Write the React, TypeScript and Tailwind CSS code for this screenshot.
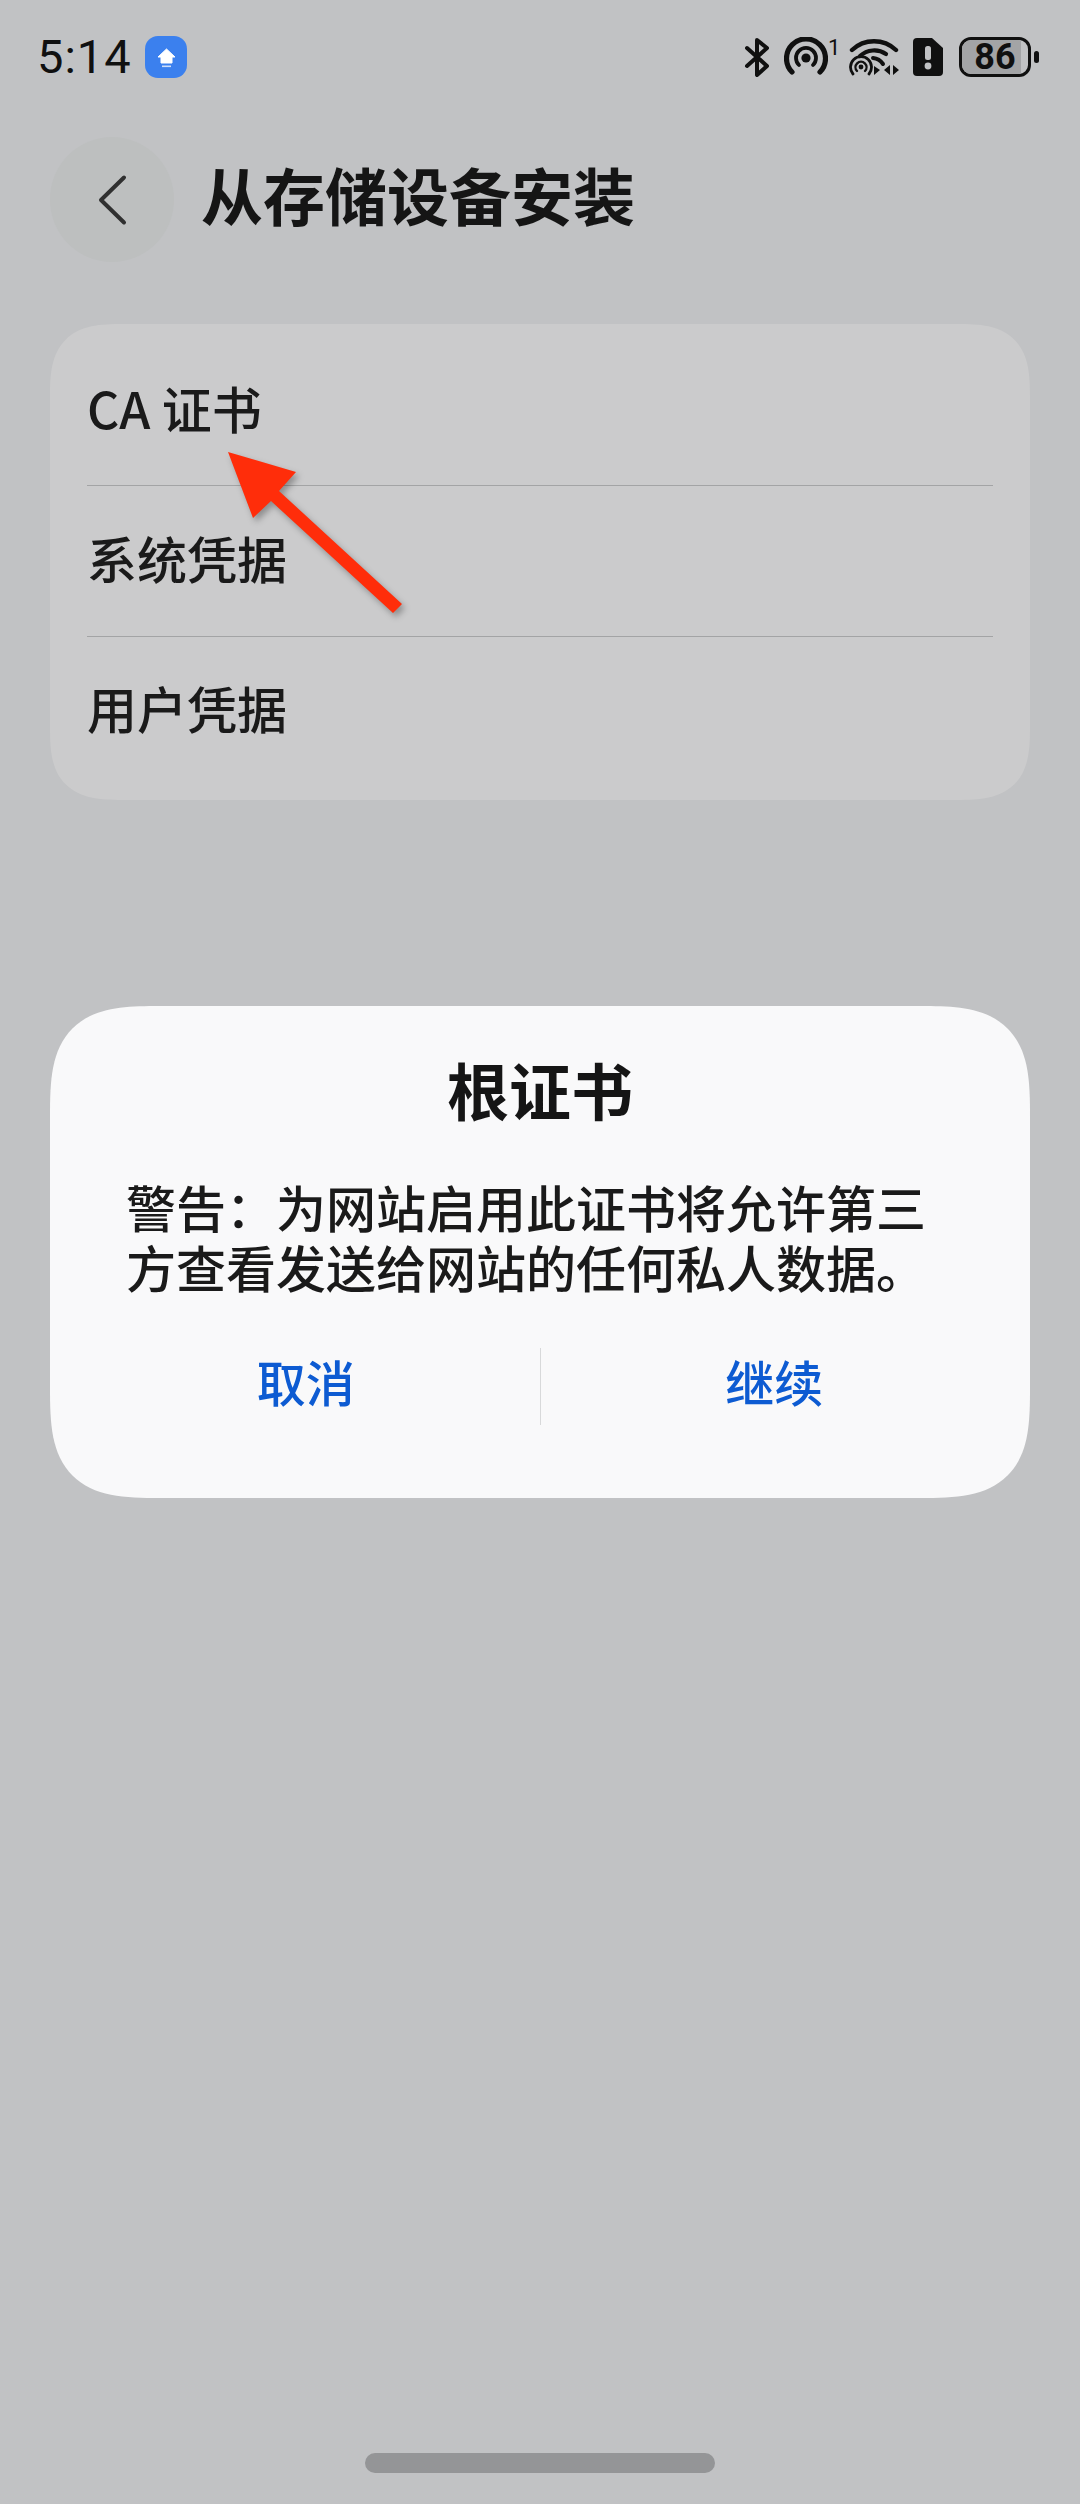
const F = '[font-family:"Noto_Sans_CJK_SC","Noto_Sans",sans-serif]';

function Bluetooth() {
  return (
    <svg width="26" height="40" viewBox="0 0 26 40" fill="none" stroke="#101010" strokeWidth="4" strokeLinecap="round" strokeLinejoin="round">
      <path d="M3 11 L23 29 L13 38 L13 3 L23 11 L3 29" />
    </svg>
  );
}

function Hotspot() {
  return (
    <svg width="44" height="40" viewBox="0 0 44 40" fill="none" stroke="#101010" strokeLinecap="round">
      <path d="M8 35 A19.5 19.5 0 1 1 36 35" strokeWidth="5.2" />
      <path d="M15 28 A10 10 0 1 1 29 28" strokeWidth="3.8" />
      <circle cx="22" cy="21" r="4.6" fill="#101010" stroke="none" />
    </svg>
  );
}

function Wifi() {
  return (
    <svg width="50" height="40" viewBox="0 0 50 40" fill="none" stroke="#101010" strokeLinecap="round">
      <path d="M3 13 A32 32 0 0 1 47 13" strokeWidth="4.4" />
      <path d="M11 19 A21 21 0 0 1 37 17" strokeWidth="4.2" />
      <path d="M24 21 A14 14 0 0 1 34 27" strokeWidth="4" />
      <path d="M4 37 A10.5 10.5 0 1 1 20 37" strokeWidth="2.8" />
      <path d="M8 34 A5.5 5.5 0 1 1 16 34" strokeWidth="2.4" />
      <circle cx="12" cy="30" r="2.4" fill="#101010" stroke="none" />
      <path d="M25 29 L31 33 L25 38 Z" fill="#101010" stroke="none" />
      <path d="M41 28 L41 38 L35 33 Z M44 28 L44 38 L50 33 Z" fill="#101010" stroke="none" />
    </svg>
  );
}

function SimAlert() {
  return (
    <svg width="30" height="38" viewBox="0 0 30 38">
      <path d="M4 0 H19 L30 10 V34 A4 4 0 0 1 26 38 H4 A4 4 0 0 1 0 34 V4 A4 4 0 0 1 4 0 Z" fill="#101010" />
      <rect x="12" y="8" width="6" height="14" rx="2.5" fill="#c1c2c4" />
      <circle cx="15" cy="28" r="3.4" fill="#c1c2c4" />
    </svg>
  );
}

function UploadBadge() {
  return (
    <svg width="42" height="42" viewBox="0 0 42 42">
      <rect width="42" height="42" rx="13" fill="#3b80ee" />
      <path d="M21.5 13 L30 21 H27 V27 H16 V21 H13 Z" fill="#fff" stroke="#fff" strokeWidth="1" strokeLinejoin="round" />
      <rect x="17" y="29.5" width="9" height="1.6" fill="#cfe0fb" />
    </svg>
  );
}

function Arrow() {
  return (
    <svg className="absolute left-[220px] top-[446px] drop-shadow-[3px_4px_3px_rgba(0,0,0,0.3)]" width="190" height="175" viewBox="220 446 190 175">
      <path d="M228 452 L296 472 L279 491 L402 604 L393 613 L271 501 L253 518 Z" fill="#ff2d0a" />
    </svg>
  );
}

export default function App() {
  return (
    <div className={`relative flex h-[2504px] w-[1080px] flex-col overflow-hidden bg-[#c1c2c4] ${F}`}>
      {/* status bar */}
      <div className="flex h-[112px] items-center pl-[37px] pr-[41px] pt-[1px] text-[#101010]">
        <span className="mr-[13px] font-['Roboto'] text-[47px] leading-none tracking-[1px]">5:14</span>
        <UploadBadge />
        <div className="ml-auto flex items-center">
          <Bluetooth />
          <div className="ml-[14px]"><Hotspot /></div>
          <span className="mb-[18px] w-[12px] font-['Roboto'] text-[22px] leading-none">1</span>
          <div className="ml-[9px]"><Wifi /></div>
          <div className="ml-[14px]"><SimAlert /></div>
          <div className="relative ml-[16px] flex h-[40px] w-[72px] items-center justify-center overflow-hidden rounded-[12px] border-[3px] border-[#101010]">
            <div className="absolute inset-y-0 left-0 w-[59px] bg-[#a3a4a6]" />
            <span className="relative font-['Roboto'] text-[36px] font-bold leading-none">86</span>
          </div>
          <div className="ml-[3px] h-[12px] w-[5px] rounded-full bg-[#101010]" />
        </div>
      </div>

      {/* header */}
      <div className="ml-[50px] mt-[25px] flex h-[125px] items-center">
        <div className="flex h-[125px] w-[124px] items-center justify-center rounded-full bg-[#bdbfbf]">
          <svg width="36" height="56" viewBox="0 0 36 56" fill="none" stroke="#303030" strokeWidth="4" strokeLinecap="round" strokeLinejoin="round">
            <path d="M30 5.5 L7 28 L30 50.5" />
          </svg>
        </div>
        <h1 className="ml-[27px] pb-[12px] text-[62px] font-bold leading-none text-[#151515]">从存储设备安装</h1>
      </div>

      {/* list */}
      <div className="mx-[50px] mt-[62px] flex flex-col rounded-[72px] bg-[#cbcbcc] text-[50px] font-medium leading-none text-[#1a1a1a] [corner-shape:superellipse(1.5)]">
        <div className="mx-[37px] flex h-[162px] items-center border-b border-[#a3a4a5] pt-[4px]">CA 证书</div>
        <div className="mx-[37px] flex h-[151px] items-center border-b border-[#a3a4a5] pb-[8px]">系统凭据</div>
        <div className="mx-[37px] flex h-[163px] items-center pb-[24px]">用户凭据</div>
      </div>

      <Arrow />

      {/* dialog */}
      <div className="mx-[50px] mt-[206px] flex h-[492px] flex-col items-center rounded-[110px] bg-[#f9f9fa] px-[76px] [corner-shape:superellipse(1.6)]">
        <h2 className="mt-[52px] text-[62px] font-bold leading-none text-[#151515]">根证书</h2>
        <p className="mt-[56px] self-stretch pr-[16px] text-[50px] font-medium leading-[60px] text-[#1a1a1a]">警告：为网站启用此证书将允许第三方查看发送给网站的任何私人数据。</p>
        <div className="-mx-[54px] mt-[52px] flex h-[77px] w-[936px] items-center text-[49px] font-medium leading-none text-[#0d5bd2]">
          <span className="flex-1 pb-[12px] text-center">取消</span>
          <div className="h-full w-px bg-[#d8d9da]" />
          <span className="flex-1 pb-[12px] text-center">继续</span>
        </div>
      </div>

      {/* home indicator */}
      <div className="mx-auto mt-[955px] h-[20px] w-[350px] rounded-full bg-[#949597]" />
    </div>
  );
}
